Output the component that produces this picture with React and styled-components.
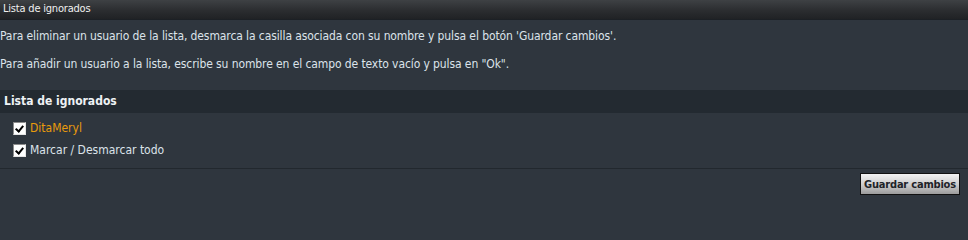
import React, { useState } from 'react';
import styled, { createGlobalStyle } from 'styled-components';

const GlobalStyle = createGlobalStyle`
    html, body {
        margin: 0;
        padding: 0;
        background: #2f363e;
    }
    body {
        font-family: "DejaVu Sans Condensed", "DejaVu Sans", Verdana, sans-serif;
    }
`;

const ignored = [{ id: 1, name: 'DitaMeryl' }];

export default function App() {
    const [checked, setChecked] = useState({ 1: true });
    const [all, setAll] = useState(true);

    return (
        <>
            <GlobalStyle />
            <Panel>
                <TitleBar>Lista de ignorados</TitleBar>
                <Intro>
                    <Paragraph>Para eliminar un usuario de la lista, desmarca la casilla asociada con su nombre y pulsa el botón 'Guardar cambios'.</Paragraph>
                    <Paragraph>Para añadir un usuario a la lista, escribe su nombre en el campo de texto vacío y pulsa en "Ok".</Paragraph>
                </Intro>
                <SectionHeader>Lista de ignorados</SectionHeader>
                <List>
                    {ignored.map((u) => (
                        <Row key={u.id}>
                            <Check
                                type="checkbox"
                                checked={!!checked[u.id]}
                                onChange={(e) => setChecked({ ...checked, [u.id]: e.target.checked })}
                            />
                            <Label $user>{u.name}</Label>
                        </Row>
                    ))}
                    <Row>
                        <Check type="checkbox" checked={all} onChange={(e) => setAll(e.target.checked)} />
                        <Label>Marcar / Desmarcar todo</Label>
                    </Row>
                </List>
                <Footer>
                    <SaveButton>Guardar cambios</SaveButton>
                </Footer>
            </Panel>
        </>
    );
}

const Panel = styled.div`
    width: 968px;
    height: 200px;
    background: #2f363e;
    color: #dce3ea;
    font-size: 12px;
    overflow: hidden;
`;

const TitleBar = styled.div`
    height: 19px;
    line-height: 18px;
    padding-left: 3px;
    font-size: 11px;
    letter-spacing: -0.2px;
    color: #f0f0f0;
    background: linear-gradient(#3e4144, #2b2d30 55%, #202225);
    border-bottom: 1px solid #1c2025;
`;

const Intro = styled.div`
    padding: 2px 0 12px 0;
`;

const Paragraph = styled.p`
    margin: 0;
    line-height: 28px;
    letter-spacing: -0.1px;
`;

const SectionHeader = styled.div`
    height: 23px;
    line-height: 23px;
    padding-left: 4px;
    background: #232a31;
    color: #eef2f5;
    font-size: 12px;
    font-weight: bold;
`;

const List = styled.div`
    padding: 8px 13px 11px;
    display: flex;
    flex-direction: column;
    gap: 8px;
    border-bottom: 1px solid #22282e;
`;

const Row = styled.label`
    display: flex;
    align-items: center;
    gap: 4px;
    height: 14px;
`;

const Check = styled.input`
    appearance: none;
    margin: 0;
    width: 13px;
    height: 13px;
    box-sizing: border-box;
    border: 1px solid #8c8c8c;
    border-right-color: #e6e6e6;
    border-bottom-color: #e6e6e6;
    background: #ffffff;
    position: relative;
    &:checked::after {
        content: '';
        position: absolute;
        left: 3px;
        top: 1px;
        width: 3px;
        height: 6px;
        border: solid #000;
        border-width: 0 2px 2px 0;
        transform: rotate(40deg);
    }
`;

const Label = styled.span`
    color: ${(p) => (p.$user ? '#e99b0c' : '#dce3ea')};
    font-size: 12px;
`;

const Footer = styled.div`
    display: flex;
    justify-content: flex-end;
    padding: 4px 8px 0 0;
`;

const SaveButton = styled.button`
    width: 100px;
    height: 22px;
    padding: 0;
    border: 1px solid #111;
    background: linear-gradient(#f2f2f2, #cbcbcb 55%, #9c9c9c);
    color: #1e2328;
    font-family: "DejaVu Sans Condensed", "DejaVu Sans", Verdana, sans-serif;
    font-size: 11px;
    font-weight: bold;
    letter-spacing: -0.2px;
`;
